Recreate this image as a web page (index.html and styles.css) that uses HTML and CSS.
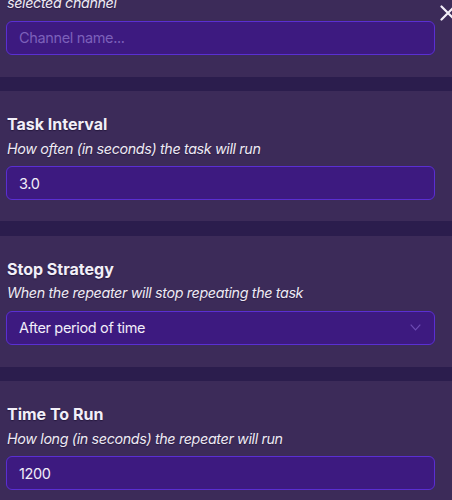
FILE: index.html
```html
<!DOCTYPE html>
<html>
<head>
<meta charset="utf-8">
<link rel="stylesheet" href="styles.css">
</head>
<body>
<div class="panel">
  <section class="card card-first">
    <p class="desc">selected channel</p>
    <div class="field"><span class="placeholder">Channel name...</span></div>
  </section>
  <section class="card">
    <h2 class="title">Task Interval</h2>
    <p class="desc">How often (in seconds) the task will run</p>
    <div class="field"><span class="value">3.0</span></div>
  </section>
  <section class="card card-tall">
    <h2 class="title">Stop Strategy</h2>
    <p class="desc">When the repeater will stop repeating the task</p>
    <div class="field select">
      <span class="value">After period of time</span>
      <svg class="chevron" width="11" height="7" viewBox="0 0 11 7"><path d="M0.7 0.7 L5.5 5.8 L10.3 0.7" fill="none" stroke="#6d4cb4" stroke-width="1.2"/></svg>
    </div>
  </section>
  <section class="card">
    <h2 class="title">Time To Run</h2>
    <p class="desc">How long (in seconds) the repeater will run</p>
    <div class="field"><span class="value">1200</span></div>
  </section>
</div>
<svg class="close" width="16" height="16" viewBox="0 0 16 16"><path d="M1.5 1.5 L14.5 14.5 M14.5 1.5 L1.5 14.5" stroke="#f3eff9" stroke-width="2.2" stroke-linecap="round"/></svg>
</body>
</html>
```
FILE: styles.css
```css
html, body {
  margin: 0;
  padding: 0;
  height: 100%;
  overflow: hidden;
  background: #2b1d4d;
  font-family: Inter, "Noto Sans", sans-serif;
}

.panel {
  display: flex;
  flex-direction: column;
  gap: 14.5px;
}

.card {
  background: #3c2b59;
  padding: 23px 17px 21px 6px;
  display: flex;
  flex-direction: column;
}

.card-first {
  margin-top: -6px;
  padding-top: 0;
  padding-bottom: 22px;
}

.card-tall {
  padding-bottom: 22px;
}

.title {
  margin: 0 0 5.5px 1px;
  font-size: 16px;
  line-height: 20px;
  font-weight: 700;
  color: #f2eff8;
  text-shadow: 0 1px 1px rgba(15, 5, 35, 0.5);
}

.desc {
  margin: 0 0 8.5px 1px;
  font-size: 14.3px;
  line-height: 18px;
  font-style: italic;
  color: #eeeaf4;
  text-shadow: 0 1px 1px rgba(15, 5, 35, 0.4);
  letter-spacing: -0.35px;
}

.field {
  height: 34px;
  box-sizing: border-box;
  border: 1.2px solid #5a2fd2;
  border-radius: 6px;
  background: #3d1a80;
  display: flex;
  align-items: center;
  padding: 0 12px;
  font-size: 14.5px;
  letter-spacing: -0.35px;
}

.value {
  color: #f1edf9;
}

.placeholder {
  color: #7c60ba;
}

.select {
  justify-content: space-between;
}

.chevron {
  display: block;
  margin-right: 1px;
}

.close {
  position: absolute;
  top: 5px;
  left: 440px;
}
```
